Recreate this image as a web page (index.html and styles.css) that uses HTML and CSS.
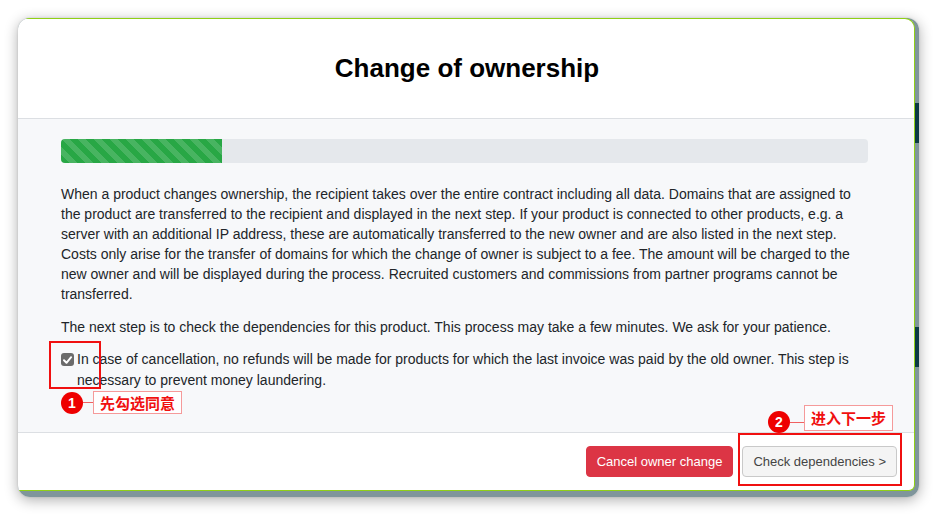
FILE: index.html
```html
<!DOCTYPE html>
<html lang="en">
<head>
<meta charset="utf-8">
<title>Change of ownership</title>
<link rel="stylesheet" href="styles.css">
</head>
<body>
<div class="window">
  <div class="modal">
    <header class="modal-header">
      <h1 class="modal-title">Change of ownership</h1>
    </header>
    <section class="modal-body">
      <div class="progress"><div class="progress-bar" style="width: 20%"></div></div>
      <p class="text">When a product changes ownership, the recipient takes over the entire contract including all data. Domains that are assigned to the product are transferred to the recipient and displayed in the next step. If your product is connected to other products, e.g. a server with an additional IP address, these are automatically transferred to the new owner and are also listed in the next step. Costs only arise for the transfer of domains for which the change of owner is subject to a fee. The amount will be charged to the new owner and will be displayed during the process. Recruited customers and commissions from partner programs cannot be transferred.</p>
      <p class="text">The next step is to check the dependencies for this product. This process may take a few minutes. We ask for your patience.</p>
      <label class="check">
        <span class="box"><svg viewBox="0 0 14 14" width="14" height="14"><path d="M3.2 7.3 L5.9 10 L10.9 4" fill="none" stroke="#fff" stroke-width="2.1" stroke-linecap="round" stroke-linejoin="round"/></svg></span>
        <span class="check-text">In case of cancellation, no refunds will be made for products for which the last invoice was paid by the old owner. This step is necessary to prevent money laundering.</span>
      </label>
    </section>
    <footer class="modal-footer">
      <button class="btn btn-danger">Cancel owner change</button>
      <button class="btn btn-light">Check dependencies &gt;</button>
    </footer>
  </div>

  <div class="mark mark-1"></div>
  <div class="note note-1"><span class="dot">1</span><span class="leader"></span><span class="tag">先勾选同意</span></div>
  <div class="mark mark-2"></div>
  <div class="note note-2"><span class="dot">2</span><span class="leader"></span><span class="tag">进入下一步</span></div>
</div>
</body>
</html>
```

FILE: styles.css
```css
html, body {
  margin: 0;
  padding: 0;
  background: #ffffff;
}
body {
  font-family: "Liberation Sans", Arial, Helvetica, sans-serif;
  color: #212529;
  width: 938px;
  height: 515px;
  overflow: hidden;
}
.window {
  position: relative;
  margin: 18px 0 0 18px;
  width: 901px;
  height: 479px;
  border-radius: 12px;
  overflow: hidden;
  box-shadow: 0 3px 14px rgba(0, 0, 0, 0.32), 0 0 2px rgba(0, 0, 0, 0.15);
  background:
    linear-gradient(to bottom,
      #7f959b 0, #7f959b 85px,
      #0b3944 85px, #0b3944 125px,
      #7f959b 125px, #7f959b 309px,
      #0b3944 309px, #0b3944 349px,
      #7f959b 349px);
}
.modal {
  width: 896px;
  height: 471px;
  background: #ffffff;
  border-top: 1px solid #8fd016;
  border-right: 1px solid #8fd016;
  border-bottom: 1px solid #8fd016;
  border-radius: 0 10px 6px 0;
  display: flex;
  flex-direction: column;
  overflow: hidden;
}
.modal-header {
  height: 99px;
  border-bottom: 1px solid #dcdfe3;
  display: flex;
  align-items: center;
  justify-content: center;
  padding-left: 2px;
}
.modal-title {
  margin: 0;
  font-size: 26px;
  font-weight: 700;
  color: #000;
}
.modal-body {
  background: #f7f8fa;
  padding: 20px 46px 0 43px;
  height: 293px;
  border-bottom: 1px solid #dcdfe3;
}
.progress {
  height: 24px;
  background: #e5e8ec;
  border-radius: 4px;
  overflow: hidden;
  display: flex;
}
.progress-bar {
  height: 100%;
  background-color: #28a745;
  background-image: linear-gradient(45deg,
    rgba(255,255,255,.15) 25%, transparent 25%,
    transparent 50%, rgba(255,255,255,.15) 50%,
    rgba(255,255,255,.15) 75%, transparent 75%, transparent);
  background-size: 16px 16px;
}
.text {
  font-size: 14px;
  line-height: 20px;
  margin: 21px 0 0;
}
.text + .text {
  margin-top: 13px;
}
.check {
  display: flex;
  align-items: flex-start;
  margin-top: 12px;
  font-size: 14px;
  line-height: 21px;
}
.box {
  flex: none;
  width: 13px;
  height: 13px;
  margin: 4px 3px 0 0;
  border-radius: 3px;
  background: #6b6b6b;
  display: flex;
  align-items: center;
  justify-content: center;
}
.box svg {
  display: block;
}
.modal-footer {
  flex: 1;
  display: flex;
  justify-content: flex-end;
  align-items: flex-start;
  gap: 9px;
  padding: 13px 17px 0 0;
}
.btn {
  font-family: "Liberation Sans", Arial, Helvetica, sans-serif;
  font-size: 13px;
  height: 31px;
  border-radius: 4px;
  padding: 0 10px;
  cursor: pointer;
}
.btn-danger {
  background: #dc3545;
  border: 1px solid #dc3545;
  color: #fff;
}
.btn-light {
  background: #f4f4f4;
  border: 1px solid #c9c9c9;
  color: #444;
}

/* annotations */
.mark {
  position: absolute;
  border: 2px solid #f01010;
  box-sizing: border-box;
}
.mark-1 {
  left: 31px;
  top: 323px;
  width: 52px;
  height: 48px;
}
.mark-2 {
  left: 720px;
  top: 415px;
  width: 164px;
  height: 53px;
}
.note {
  position: absolute;
  display: flex;
  align-items: center;
}
.note-1 {
  left: 43px;
  top: 373px;
}
.note-2 {
  left: 750px;
  top: 385px;
}
.dot {
  width: 22px;
  height: 22px;
  border-radius: 50%;
  background: #ee0000;
  color: #fff;
  font-size: 14px;
  font-weight: 700;
  display: flex;
  align-items: center;
  justify-content: center;
}
.note-2 .dot {
  margin-top: 8px;
}
.leader {
  width: 10px;
  height: 1px;
  background: #f06060;
}
.note-2 .leader {
  width: 14px;
  margin-top: 8px;
}
.tag {
  border: 1px solid #f59a9a;
  background: rgba(255,255,255,0.85);
  color: #f01010;
  font-family: "Noto Sans CJK SC", sans-serif;
  font-weight: 700;
  font-size: 15px;
  line-height: 21px;
  padding: 0 6px;
}
.note-2 .tag {
  line-height: 24px;
}
```
